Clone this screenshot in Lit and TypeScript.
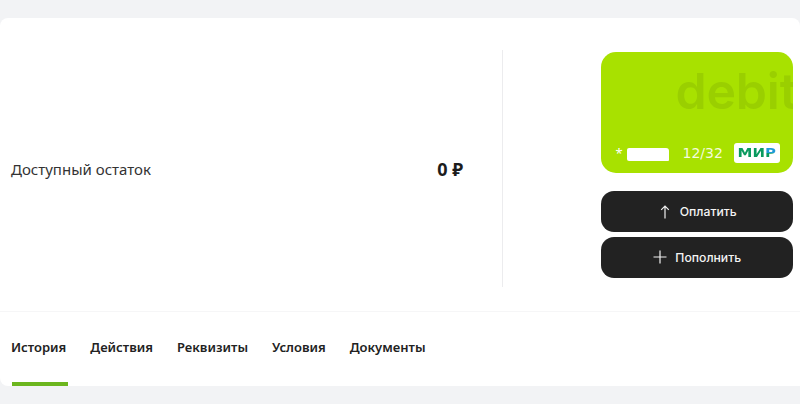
import { LitElement, html, css } from "lit";
import { customElement } from "lit/decorators.js";

@customElement("app-root")
export class AppRoot extends LitElement {
  static styles = css`
    :host {
      display: block;
      width: 800px;
      height: 404px;
      background: #f2f3f5;
      padding-top: 18px;
      box-sizing: border-box;
      font-family: "Noto Sans", "Open Sans", sans-serif;
      color: #222;
      overflow: hidden;
    }
    .panel {
      background: #fff;
      border-radius: 8px 8px 0 8px;
      height: 368px;
      display: flex;
      flex-direction: column;
    }
    .main {
      height: 294px;
      box-sizing: border-box;
      padding-top: 32px;
      display: flex;
      border-bottom: 1px solid #f6f6f7;
    }
    .balance {
      width: 503px;
      height: 237px;
      box-sizing: border-box;
      padding: 0 39px 0 11px;
      border-right: 1px solid #ececee;
      display: flex;
      align-items: center;
      justify-content: space-between;
    }
    .label {
      font-size: 15px;
      color: #333;
    }
    .amount {
      font-size: 18px;
      font-weight: 700;
      color: #1c1c1c;
    }
    .side {
      margin-left: 97.5px;
      width: 192.5px;
      padding-top: 2px;
      display: flex;
      flex-direction: column;
    }
    .card {
      height: 121px;
      border-radius: 15px;
      background: #a8e100;
      overflow: hidden;
      display: flex;
      flex-direction: column;
      margin-bottom: 18px;
    }
    .debit {
      font-family: "Inter", sans-serif;
      font-size: 50px;
      line-height: 56px;
      font-weight: 600;
      letter-spacing: -0.2px;
      color: #9acf00;
      white-space: nowrap;
      padding: 11px 0 0 75px;
      flex: 1;
    }
    .card-foot {
      display: flex;
      align-items: center;
      padding: 0 13px 10px 15px;
      color: #f4fbdc;
    }
    .star {
      font-size: 13px;
      color: #fff;
      width: 11px;
    }
    .mask {
      width: 42px;
      height: 13px;
      background: #fff;
      border-radius: 2px 3px 1px 2px;
      margin-top: 2px;
    }
    .expiry {
      font-family: "DejaVu Sans", sans-serif;
      font-size: 14px;
      margin-left: 14px;
    }
    .mir {
      margin-left: auto;
      width: 46px;
      height: 20px;
      background: #fff;
      border-radius: 3px;
      display: flex;
      align-items: center;
      justify-content: center;
    }
    .mir-text {
      display: block;
      font-family: "DejaVu Sans", sans-serif;
      font-weight: 700;
      font-size: 11.5px;
      line-height: 12px;
      color: #0a9a5e;
      transform: scaleX(1.3);
    }
    .mir-text span {
      background: linear-gradient(180deg, #1f9ad6 0 50%, #0a9a5e 50%);
      -webkit-background-clip: text;
      background-clip: text;
      color: transparent;
    }
    .btn {
      height: 41px;
      border-radius: 13px;
      background: #222222;
      color: #f4f4f4;
      font-family: "Inter", sans-serif;
      font-size: 12.2px;
      font-weight: 500;
      display: flex;
      align-items: center;
      justify-content: center;
      gap: 8px;
      padding-left: 1px;
      margin-bottom: 4.5px;
    }
    .btn svg {
      display: block;
    }
    .tabs {
      flex: 1;
      display: flex;
      gap: 24px;
      padding-left: 11px;
      align-items: stretch;
    }
    .tab {
      font-size: 13px;
      font-weight: 600;
      color: #222;
      display: flex;
      align-items: center;
      padding-bottom: 4px;
      box-sizing: border-box;
      position: relative;
    }
    .tab.active::after {
      content: "";
      position: absolute;
      left: 1px;
      right: -2px;
      bottom: 0;
      height: 4px;
      background: #6cb61e;
    }
  `;

  render() {
    const tabs = ["История", "Действия", "Реквизиты", "Условия", "Документы"];
    return html`
      <div class="panel">
        <div class="main">
          <div class="balance">
            <div class="label">Доступный остаток</div>
            <div class="amount">0 ₽</div>
          </div>
          <div class="side">
            <div class="card">
              <div class="debit">debit</div>
              <div class="card-foot">
                <div class="star">*</div>
                <div class="mask"></div>
                <div class="expiry">12/32</div>
                <div class="mir"><div class="mir-text">МИ<span>Р</span></div></div>
              </div>
            </div>
            <div class="btn">
              <svg width="14" height="14" viewBox="0 0 14 14" fill="none" stroke="#f0f0f0" stroke-width="1.2">
                <path d="M7 13.5V1M3.2 4.8L7 1L10.8 4.8" />
              </svg>
              Оплатить
            </div>
            <div class="btn">
              <svg width="14" height="14" viewBox="0 0 14 14" fill="none" stroke="#f0f0f0" stroke-width="1.2">
                <path d="M7 0.5V13.5M0.5 7H13.5" />
              </svg>
              Пополнить
            </div>
          </div>
        </div>
        <div class="tabs">
          ${tabs.map((t, i) => html`<div class="tab ${i === 0 ? "active" : ""}">${t}</div>`)}
        </div>
      </div>
    `;
  }
}
